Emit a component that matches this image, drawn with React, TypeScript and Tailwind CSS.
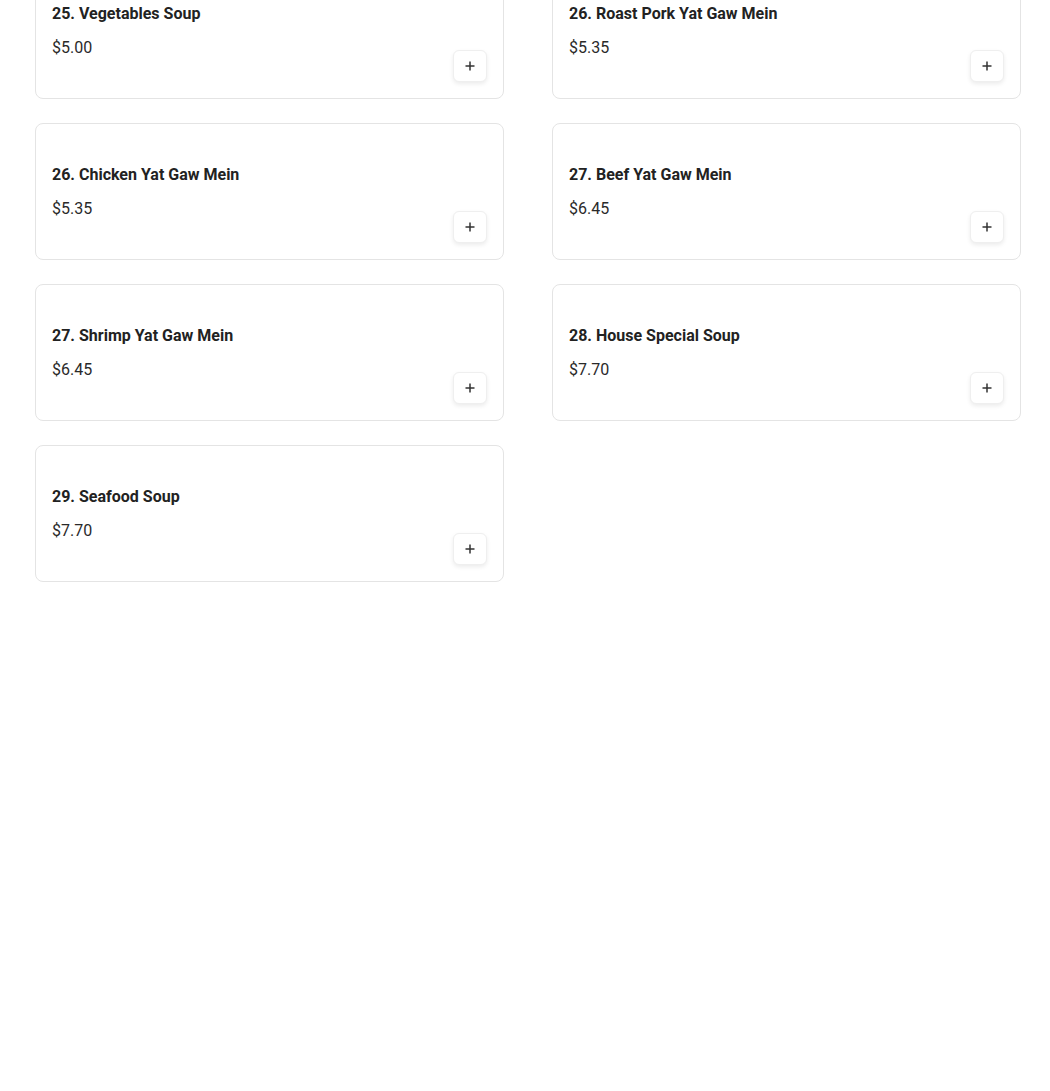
const items = [
  { name: "25. Vegetables Soup", price: "$5.00" },
  { name: "26. Roast Pork Yat Gaw Mein", price: "$5.35" },
  { name: "26. Chicken Yat Gaw Mein", price: "$5.35" },
  { name: "27. Beef Yat Gaw Mein", price: "$6.45" },
  { name: "27. Shrimp Yat Gaw Mein", price: "$6.45" },
  { name: "28. House Special Soup", price: "$7.70" },
  { name: "29. Seafood Soup", price: "$7.70" },
];

export default function App() {
  return (
    <div className="min-h-[1091px] bg-white font-['Roboto',sans-serif] text-[#222]">
      <div className="-mt-[38px] grid grid-cols-[469px_469px] gap-x-[48px] gap-y-[24px] px-[35px]">
        {items.map((item, i) => (
          <MenuCard key={i} name={item.name} price={item.price} />
        ))}
      </div>
    </div>
  );
}

function MenuCard({ name, price }: { name: string; price: string }) {
  return (
    <div className="flex h-[137px] items-end justify-between rounded-lg border border-[#e4e4e4] bg-white px-4 pb-4 pt-[40px]">
      <div className="flex h-full flex-col">
        <h3 className="text-[16px] font-bold leading-[22px]">{name}</h3>
        <p className="mt-3 text-[16px] leading-[22px] text-[#2a2a2a]">{price}</p>
      </div>
      <button
        aria-label="Add"
        className="flex h-[32px] w-[34px] items-center justify-center rounded-md border border-[#efefef] bg-white shadow-[0_2px_4px_rgba(0,0,0,0.08)]"
      >
        <svg width="10" height="10" viewBox="0 0 10 10">
          <path d="M5 0.5v9M0.5 5h9" stroke="#333" strokeWidth="1.5" />
        </svg>
      </button>
    </div>
  );
}
